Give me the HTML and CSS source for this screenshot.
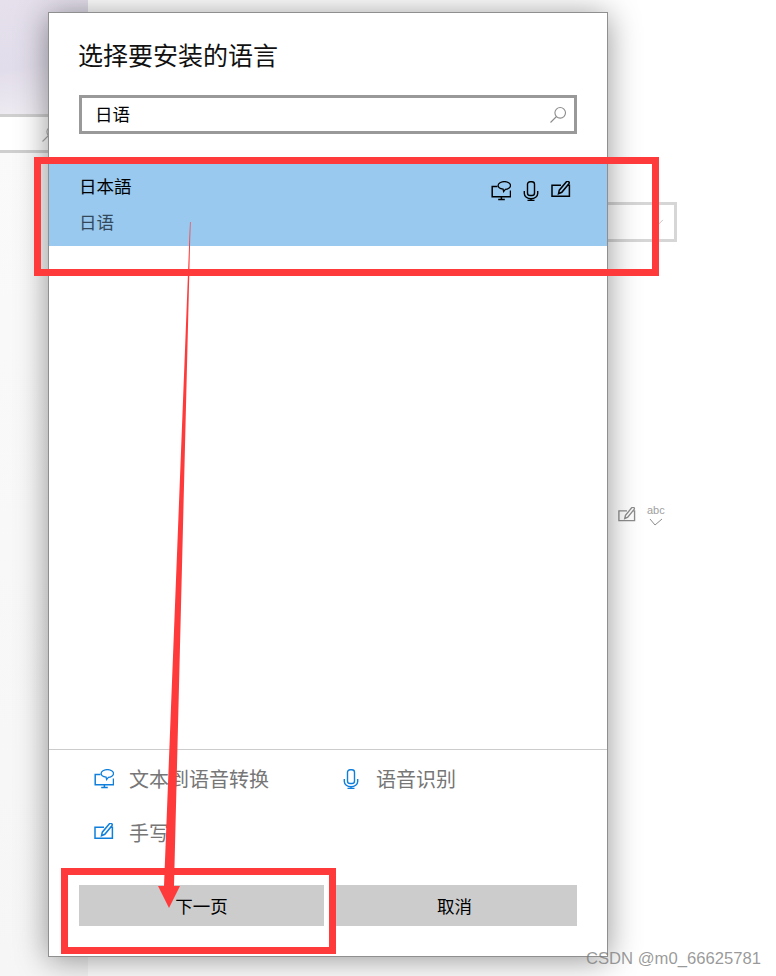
FILE: index.html
```html
<!DOCTYPE html>
<html lang="zh-CN">
<head>
<meta charset="utf-8">
<title>选择要安装的语言</title>
<link rel="stylesheet" href="styles.css">
</head>
<body>
<svg class="defs" width="0" height="0" aria-hidden="true">
  <symbol id="i-tts" viewBox="0 0 20 20">
    <path d="M6.500 5.500H1.200v10.200H19.500V9.500M10.400 15.700v2.600M7.200 18.600h6.600" fill="none" stroke="currentColor" stroke-width="1.500"/>
    <path d="M13.400 .6c3.300 0 6.100 1.700 6.100 3.900S16.700 8.400 14.400 8.400l-1.800 2.200-.5-2.500C9.400 7.800 7.100 6.500 7.100 4.500 7.100 2.300 10 .6 13.400 .6z" fill="none" stroke="currentColor" stroke-width="1.300"/>
  </symbol>
  <symbol id="i-mic" viewBox="0 0 20 20">
    <rect x="6.500" y=".7" width="7" height="13.800" rx="2.600" fill="none" stroke="currentColor" stroke-width="1.400"/>
    <path d="M3.300 10v2.600a6.700 5.200 0 0 0 13.400 0V10M10 17.800v1.700M6.500 19.400h7" fill="none" stroke="currentColor" stroke-width="1.400"/>
  </symbol>
  <symbol id="i-pen" viewBox="0 0 20 20">
    <path d="M10 4.300H1v10.900h17.400V4.300h-1.600" fill="none" stroke="currentColor" stroke-width="1.500"/>
    <path d="M7.500 12.800l.8-3.600L15.200.9c.7-.8 1.600-.8 2.400-.3.700.5.800 1.300.3 2.100L10.800 11.300z" fill="none" stroke="currentColor" stroke-width="1.500"/>
  </symbol>
  <symbol id="i-search" viewBox="0 0 20 20">
    <circle cx="12.200" cy="7.800" r="5.300" fill="none" stroke="currentColor" stroke-width="1.100"/>
    <path d="M8.500 11.500L2.500 17.500" fill="none" stroke="currentColor" stroke-width="1.100"/>
  </symbol>
  <symbol id="i-chevron" viewBox="0 0 20 20">
    <path d="M3 7l7 7 7-7" fill="none" stroke="currentColor" stroke-width="1"/>
  </symbol>
</svg>

<div class="desktop">
  <aside class="sidebar">
    <div class="sidebar-head"></div>
    <div class="back-search"><svg class="back-search-icon"><use href="#i-search"/></svg></div>
  </aside>
  <main class="settings">
    <div class="back-combo"><svg class="back-chevron"><use href="#i-chevron"/></svg></div>
    <div class="back-caps">
      <svg class="back-pen"><use href="#i-pen"/></svg>
      <div class="back-abc"><span>abc</span><svg class="back-check" viewBox="0 0 14 8"><path d="M1 1l5 6 7-6" fill="none" stroke="currentColor"/></svg></div>
    </div>
  </main>
</div>

<section class="dialog">
  <h1 class="dialog-title">选择要安装的语言</h1>
  <div class="search">
    <span class="search-text">日语</span>
    <svg class="search-icon"><use href="#i-search"/></svg>
  </div>
  <div class="results">
    <div class="result selected">
      <div class="result-names">
        <div class="result-name">日本語</div>
        <div class="result-sub">日语</div>
      </div>
      <div class="result-caps">
        <svg class="cap"><use href="#i-tts"/></svg>
        <svg class="cap"><use href="#i-mic"/></svg>
        <svg class="cap"><use href="#i-pen"/></svg>
      </div>
    </div>
  </div>
  <div class="legend">
    <div class="legend-item"><svg class="legend-icon"><use href="#i-tts"/></svg><span>文本到语音转换</span></div>
    <div class="legend-item"><svg class="legend-icon"><use href="#i-mic"/></svg><span>语音识别</span></div>
    <div class="legend-item"><svg class="legend-icon"><use href="#i-pen"/></svg><span>手写</span></div>
  </div>
  <div class="actions">
    <button class="btn" type="button">下一页</button>
    <button class="btn" type="button">取消</button>
  </div>
</section>

<svg class="markup" width="776" height="976" viewBox="0 0 776 976" aria-hidden="true">
  <rect x="37.500" y="160.500" width="618" height="112" fill="none" stroke="#ff3a3a" stroke-width="7"/>
  <rect x="64.500" y="871.500" width="268" height="79" fill="none" stroke="#ff3a3a" stroke-width="7"/>
  <polygon points="190,222 190.600,222 174,886 180,886 169,908 158,886 164,886" fill="#ff3a3a"/>
</svg>

<div class="watermark">CSDN @m0_66625781</div>
</body>
</html>
```
FILE: styles.css
```css
* { box-sizing: border-box; }
html, body { margin: 0; height: 100%; }
body {
  width: 776px;
  height: 976px;
  position: relative;
  overflow: hidden;
  background: #fff;
  font-family: "Noto Sans CJK SC", "Noto Sans", sans-serif;
  color: #000;
}
.defs { position: absolute; }

/* window behind the dialog */
.desktop { display: flex; height: 976px; }
.sidebar {
  width: 88px;
  flex: none;
  background: linear-gradient(180deg, #fafafb 116px, #f6f6f7 100%);
}
.sidebar-head {
  height: 114px;
  background: linear-gradient(170deg, #e5e0ec 0%, #e2ddea 55%, #f1eef4 100%);
}
.back-search {
  height: 39px;
  background: #fff;
  border-top: 3px solid #cfcfcf;
  border-bottom: 3px solid #cfcfcf;
  display: flex;
  align-items: center;
  justify-content: flex-end;
}
.back-search-icon { width: 20px; height: 20px; margin-right: 28px; color: #aaa; }
.settings { flex: 1; padding-top: 202px; }
.back-combo {
  width: 70px;
  height: 40px;
  margin-left: 519px;
  border: 3px solid #d6d6d6;
  border-left: 0;
  display: flex;
  align-items: center;
  justify-content: flex-end;
  padding-right: 9px;
}
.back-chevron { width: 14px; height: 14px; color: #aaa; }
.back-caps {
  display: flex;
  align-items: center;
  gap: 11px;
  margin: 263px 0 0 530px;
  color: #8d8d8d;
}
.back-pen { width: 18px; height: 18px; }
.back-abc {
  display: flex;
  flex-direction: column;
  align-items: center;
  gap: 2px;
  font: 11px/11px "Liberation Sans", sans-serif;
  color: #a0a0a0;
}
.back-check { width: 14px; height: 8px; color: #8d8d8d; }

/* dialog */
.dialog {
  position: absolute;
  left: 48px;
  top: 12px;
  width: 560px;
  height: 945px;
  background: #fff;
  border: 1px solid #8f8f8f;
  box-shadow: 0 3px 30px rgba(0, 0, 0, .42);
  display: flex;
  flex-direction: column;
}
.dialog-title {
  margin: 23px 0 0 29px;
  font-size: 25px;
  line-height: 36px;
  font-weight: 400;
  color: #111;
}
.search {
  height: 39px;
  margin: 23px 30px 0 30px;
  border: 3px solid #999;
  display: flex;
  align-items: center;
  justify-content: space-between;
  padding: 0 6px 0 13px;
}
.search-text { font-size: 17.500px; line-height: 24px; margin-bottom: 2px; }
.search-icon { width: 20px; height: 20px; color: #8c8c8c; margin-left: auto; }
.results { flex: 1; padding-top: 30px; }
.result {
  height: 82px;
  display: flex;
  justify-content: space-between;
  padding: 0 36px 0 30px;
}
.selected { background: #99c9ef; }
.result-names { font-size: 17.500px; line-height: 24px; padding-top: 10px; }
.result-sub { margin-top: 12px; color: #33485a; }
.result-caps { display: flex; gap: 10px; padding-top: 17px; }
.cap { width: 20px; height: 20px; }
.legend {
  height: 136px;
  border-top: 1px solid #cccccc;
  display: grid;
  grid-template-columns: 247px 1fr;
  grid-auto-rows: 54px;
  padding: 2px 0 0 45px;
}
.legend-item {
  display: flex;
  align-items: center;
  gap: 15px;
  font-size: 20px;
  line-height: 28px;
  color: #767676;
}
.legend-icon { width: 20px; height: 20px; color: #0f7fdb; flex: none; }
.actions {
  display: grid;
  grid-template-columns: 245px 245px;
  gap: 8px;
  margin: 0 30px 30px;
}
.btn {
  height: 41px;
  border: 0;
  padding: 0;
  background: #cccccc;
  font: 17.500px "Noto Sans CJK SC", sans-serif;
  color: #000;
}

/* annotations painted on top of the screenshot */
.markup { position: absolute; left: 0; top: 0; pointer-events: none; }
.watermark {
  position: absolute;
  right: 15px;
  bottom: 8px;
  font: 16.650px/18px "Liberation Sans", sans-serif;
  color: rgba(120, 120, 120, .75);
}
```
